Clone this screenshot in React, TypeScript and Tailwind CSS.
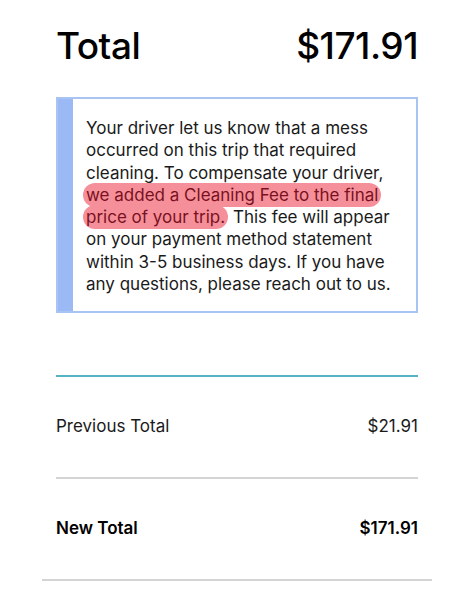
const lines: { text: string; mark?: string; rest?: string }[] = [
  { text: 'Your driver let us know that a mess' },
  { text: 'occurred on this trip that required' },
  { text: 'cleaning. To compensate your driver,' },
  { text: '', mark: 'we added a Cleaning Fee to the final' },
  { text: '', mark: 'price of your trip.', rest: ' This fee will appear' },
  { text: 'on your payment method statement' },
  { text: 'within 3-5 business days. If you have' },
  { text: 'any questions, please reach out to us.' },
]

export default function App() {
  return (
    <div className="w-[474px] h-[596px] bg-white overflow-hidden text-black" style={{ fontFamily: 'Inter, "Noto Sans", sans-serif' }}>
      <div className="px-[56px] pt-[22px]">
        <div className="flex justify-between items-center h-[48px]">
          <span className="text-[37px] font-medium tracking-[-0.5px]">Total</span>
          <span className="text-[37px] font-medium tracking-[-0.5px]">$171.91</span>
        </div>
        <div className="mt-[27px] flex border-2 border-[#a9c3f2] h-[216px]">
          <div className="w-[15px] shrink-0 bg-[#9bbaf5]" />
          <div className="pl-[13px] pt-[18px] text-[17px] leading-[22.3px] text-[#1a1a1a] whitespace-nowrap">
            {lines.map((l, i) => (
              <div key={i} className="h-[22.3px]">
                {l.text}
                {l.mark && (
                  <span className="inline-block h-[24px] -my-[1px] leading-[24px] bg-[#f5909b] text-[#7a1020] rounded-full px-[3px] -ml-[3px]">
                    {l.mark}
                  </span>
                )}
                {l.rest}
              </div>
            ))}
          </div>
        </div>
        <div className="mt-[62px] h-[2px] bg-[#57b3c4]" />
        <div className="flex justify-between items-center h-[100px] text-[17px] text-[#1a1a1a]">
          <span>Previous Total</span>
          <span>$21.91</span>
        </div>
        <div className="h-[2px] bg-[#d4d4d4]" />
        <div className="flex justify-between items-center h-[100px] text-[17px] font-semibold text-black">
          <span>New Total</span>
          <span>$171.91</span>
        </div>
      </div>
      <div className="mx-[42px] h-[2px] bg-[#d4d4d4]" />
    </div>
  )
}
